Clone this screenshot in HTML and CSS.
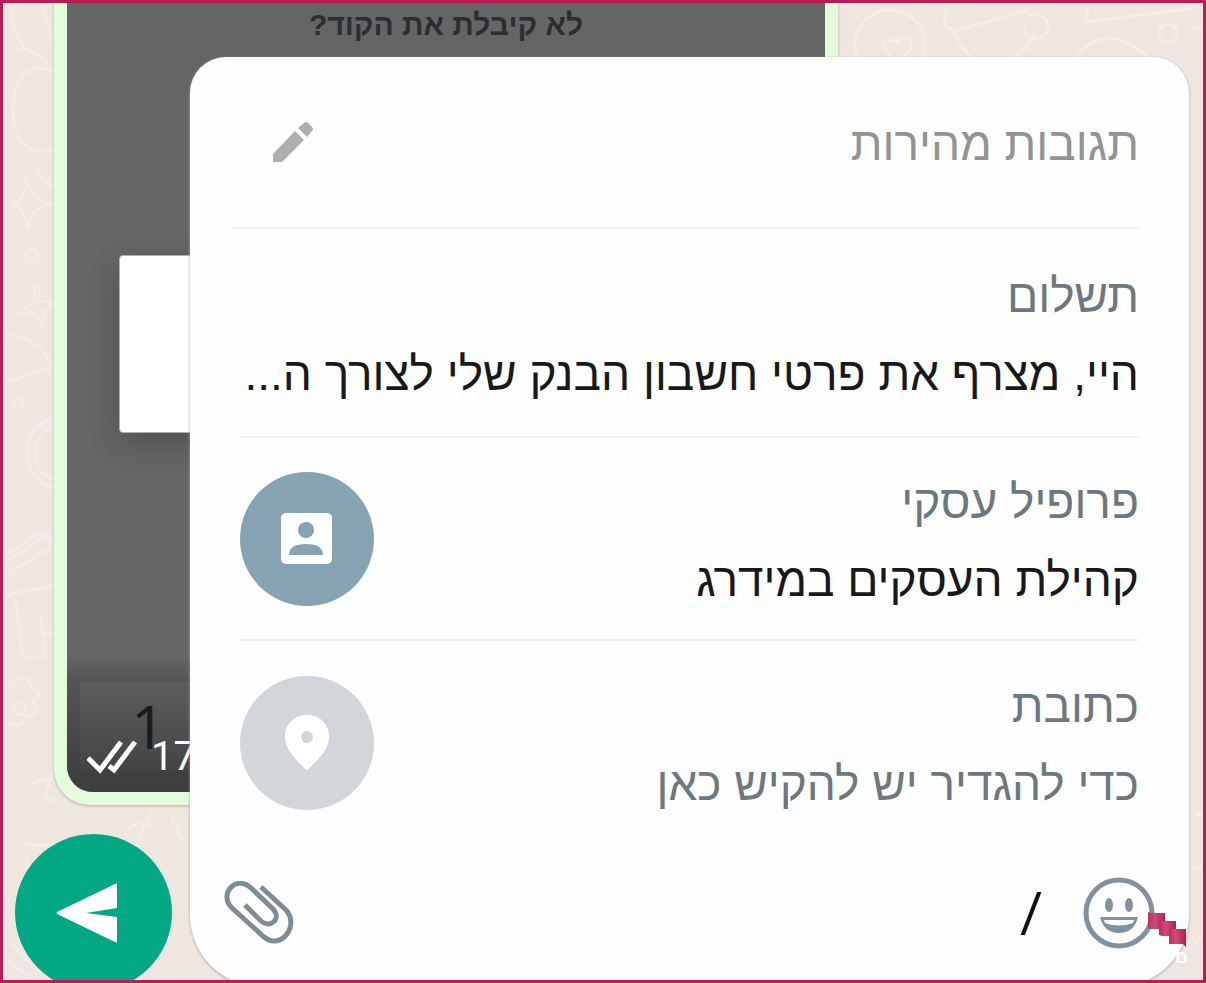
FILE: index.html
```html
<!DOCTYPE html>
<html lang="he" dir="rtl">
<head>
<meta charset="utf-8">
<title>תגובות מהירות</title>
<link rel="stylesheet" href="styles.css">
</head>
<body>
<main class="screen">
  <svg class="wallpaper" aria-hidden="true">
    <g fill="none" stroke="#f4ebe6" stroke-width="3">
      <path d="M8 3q2 40 24 48M40 3q6 30 14 38M54 147q-42 10-44-40q0-36 24-42q16 0 20 8M10 50q18-10 34 12M22 172q2 26-14 30q14 2 16 24q2-22 26-25q-24-6-28-29zM33 162q6 18 20 22"/>
      <circle cx="29" cy="252" r="6"/>
      <path d="M32 282v14l-17 16 18-2 6 14 2-16 11-8-14-2-3-16z"/>
      <path d="M3 332q32 0 46 32l-44 15M51 415q-28 8-27 40q4 24 27 30M51 422q-20 10-19 32q4 18 19 23"/>
      <circle cx="15" cy="400" r="5"/>
      <path d="M5 558l36-24q10 4 4 12l-38 24M6 550l26-18q14-4 18 8M4 592l50-10M12 595l8 60M38 610v20h16M20 655l22-2-4-40"/>
      <path d="M8 682q14-16 20 2q14 4 2 14q8 16-8 16q-4 14-16 4M16 700a6 6 0 1 0 1 0M28 780l20-6-6 22 14 2"/>
      <path d="M24 850v14h18M22 842h28M122 834q4-18 28-12M136 838l14-36M168 812l12 26M8 940l30 30M6 958l22 18"/>
    </g>
    <g fill="none" stroke="#f4ede5" stroke-width="3">
      <circle cx="887" cy="42" r="35"/>
      <path d="M880 40q8-6 14 0q4-8 12-4q8 10-8 18M880 40q2 8 8 14M943 7q-6 22 12 20l70-20M947 23q10 22 22 32M1033 27q-10 20-22 28M1027 13a12 12 0 1 1-6 10M1085 5l-2 14 110-14M1072 55q30-38 72-2"/>
      <circle cx="1165" cy="30" r="9"/>
      <path d="M1191 26h10M1191 866l12-6M1191 940l12-10M1192 810l10 3"/>
    </g>
  </svg>

  <section class="bubble" aria-label="הודעה">
    <div class="photo">
      <p class="question">לא קיבלת את הקוד?</p>
      <div class="sheet"></div>
      <div class="footer">
        <span class="key">1</span>
        <div class="meta">
          <svg width="50" height="34" viewBox="0 0 50 34" aria-hidden="true"><path d="M1 18l12 12L34 2M22 26l5 4L48 2" fill="none" stroke="#fff" stroke-width="5"/></svg>
          <time>17:34</time>
        </div>
      </div>
    </div>
  </section>

  <button class="send" type="button" aria-label="שליחה">
    <svg width="62" height="60" viewBox="0 0 62 60" aria-hidden="true"><path d="M61 1v24L30 30l31 4v25q0 1-2 0L1 31q-1-1 0-2L59 1q2-1 2 0z" fill="#fff"/></svg>
  </button>

  <section class="panel">
    <header class="head">
      <h1>תגובות מהירות</h1>
      <button class="plain" type="button" aria-label="עריכה">
        <svg width="42" height="42" viewBox="0 0 42 42" aria-hidden="true"><path d="M1 33v8h9l22-22-9-9zM26 7l6-5q2-2 4 0l4 4q2 2 0 4l-5 6z" fill="#acaeb0"/></svg>
      </button>
    </header>
    <ul class="replies">
      <li class="reply">
        <div class="words">
          <h2>תשלום</h2>
          <p>היי, מצרף את פרטי חשבון הבנק שלי לצורך ה...</p>
        </div>
      </li>
      <li class="reply">
        <div class="words">
          <h2>פרופיל עסקי</h2>
          <p>קהילת העסקים במידרג</p>
        </div>
        <span class="disc disc-profile">
          <svg width="52" height="52" viewBox="0 0 52 52" aria-hidden="true"><rect width="51" height="51" rx="5" fill="#fff"/><circle cx="25" cy="17" r="8" fill="#86a3b3"/><path d="M8 42q0-11 17-11t17 11z" fill="#86a3b3"/></svg>
        </span>
      </li>
      <li class="reply">
        <div class="words">
          <h2>כתובת</h2>
          <p class="muted">כדי להגדיר יש להקיש כאן</p>
        </div>
        <span class="disc disc-place">
          <svg width="46" height="58" viewBox="0 0 46 58" aria-hidden="true"><path d="M23 1C10 1 1 10 1 23c0 14 13 24 20 32q2 2 4 0c7-8 20-18 20-32C45 10 36 1 23 1z" fill="#fff"/><circle cx="23" cy="23" r="6" fill="#d2d6da"/></svg>
        </span>
      </li>
    </ul>
    <div class="composer">
      <button class="plain" type="button" aria-label="אמוג׳י">
        <svg width="72" height="72" viewBox="0 0 72 72" aria-hidden="true"><circle cx="36" cy="36" r="33" fill="none" stroke="#82919b" stroke-width="5"/><ellipse cx="26" cy="28" rx="4" ry="7" fill="#82919b"/><ellipse cx="46" cy="28" rx="4" ry="7" fill="#82919b"/><path d="M17 40h38q-4 16-19 16T17 40z" fill="#82919b"/><path d="M21 43h30l-1 3q-14 5-28 0z" fill="#fff"/></svg>
      </button>
      <input class="field" type="text" value="/" aria-label="הודעה">
      <button class="plain" type="button" aria-label="צירוף קובץ">
        <svg width="70" height="64" viewBox="0 0 70 64" aria-hidden="true"><path d="M37 6L62 29C76 44 57 70 40 56L8 27C-6 13 12-6 26 6L49 28C58 38 46 48 37 40L21 24" fill="none" stroke="#7e8c96" stroke-width="5"/></svg>
      </button>
    </div>
  </section>

  <div class="mark">
    <svg width="40" height="36" viewBox="0 0 40 36" aria-hidden="true">
      <defs><linearGradient id="ribbon"><stop offset="0" stop-color="#b8305f"/><stop offset=".4" stop-color="#d04a7a"/><stop offset="1" stop-color="#b02050"/></linearGradient></defs>
      <path d="M0 0l3 1h14v16H3l-3-1z" fill="url(#ribbon)"/>
      <path d="M11 8l3 1h14v15H14l-3-1z" fill="url(#ribbon)"/>
      <path d="M21 16l3 1h14v18l-3-3H21z" fill="url(#ribbon)"/>
    </svg>
    <span>ם</span>
  </div>
</main>
</body>
</html>
```
FILE: styles.css
```css
* {
  box-sizing: border-box;
  margin: 0;
  padding: 0;
}

body {
  font-family: "Liberation Sans", Arial, sans-serif;
}

.screen {
  position: relative;
  height: 100vh;
  overflow: hidden;
  border: 3px solid #b91c54;
  background: #eee6df;
}

.wallpaper {
  position: absolute;
  inset: 0;
  width: 100%;
  height: 100%;
}

.bubble {
  position: relative;
  width: 784px;
  max-width: 90%;
  margin-right: auto;
  margin-left: 51px;
  padding: 0 13px 13px;
  background: #e3fddb;
  border-radius: 0 0 36px 36px;
  box-shadow: 0 1px 3px #b8b0a8;
}

.photo {
  display: flex;
  flex-direction: column;
  align-items: flex-end;
  height: 789px;
  overflow: hidden;
  background: #656565;
  border-radius: 0 0 26px 26px;
}

.question {
  align-self: center;
  font-size: 30px;
  font-weight: 700;
  line-height: 44px;
  color: #2a2f33;
}

.sheet {
  width: 640px;
  height: 178px;
  margin-top: 208px;
  margin-left: 52px;
  background: #fff;
  border: 1px solid #b0b0b0;
  border-radius: 4px;
  box-shadow: 0 10px 30px rgba(0, 0, 0, 0.2);
}

.footer {
  position: relative;
  width: 100%;
  margin-top: auto;
  height: 134px;
  padding: 24px 13px;
  background: linear-gradient(#656565, #545556 15%, #3f4042 85%, #3c3d3f);
  direction: ltr;
}

.key {
  display: block;
  width: 220px;
  padding-left: 51px;
  background: linear-gradient(rgba(255, 255, 255, 0.05), rgba(255, 255, 255, 0.02));
  border-radius: 4px;
  font: 60px/88px "Noto Sans", sans-serif;
  color: #1c1d1e;
}

.meta {
  position: absolute;
  left: 20px;
  bottom: 12px;
  display: flex;
  align-items: center;
  gap: 14px;
  font: 40px/46px Roboto, sans-serif;
  color: #fff;
}

.send {
  position: relative;
  display: flex;
  align-items: center;
  justify-content: center;
  width: 157px;
  height: 157px;
  margin: 29px auto 0 12px;
  padding-right: 14px;
  border: 0;
  border-radius: 50%;
  background: #02a884;
}

.panel {
  position: absolute;
  top: 54px;
  right: 14px;
  bottom: -7px;
  left: 187px;
  display: flex;
  flex-direction: column;
  padding: 0 50px 0 34px;
  background: #fefefe;
  border-radius: 36px 36px 72px 72px;
  box-shadow: 0 1px 3px #aaa;
}

.head {
  display: flex;
  align-items: center;
  justify-content: space-between;
  height: 172px;
  padding-left: 40px;
  margin-left: 8px;
  border-bottom: 2px solid #f1f1f1;
}

h1,
h2,
.reply p {
  padding-top: 4px;
  font-size: 46px;
  font-weight: 400;
  line-height: 74px;
  white-space: nowrap;
}

h1 {
  color: #939393;
}

h2 {
  color: #6b7880;
}

.reply p {
  color: #17191b;
}

.reply .muted {
  color: #6b7880;
}

.plain {
  display: flex;
  border: 0;
  background: none;
}

.replies {
  list-style: none;
}

.reply {
  display: flex;
  align-items: center;
  justify-content: space-between;
  height: 203px;
  margin-left: 16px;
}

.reply:first-child {
  height: 209px;
}

.reply:not(:last-child) {
  border-bottom: 2px solid #f1f1f1;
}

.disc {
  display: flex;
  align-items: center;
  justify-content: center;
  width: 134px;
  height: 134px;
  border-radius: 50%;
}

.disc-profile {
  background: #86a3b3;
}

.disc-place {
  background: #d2d6da;
}

.composer {
  display: flex;
  align-items: center;
  gap: 40px;
  height: 138px;
  margin-right: -16px;
}

.field {
  flex: 1;
  min-width: 0;
  border: 0;
  background: none;
  font: 56px/64px Roboto, sans-serif;
  color: #111;
}

.mark {
  position: absolute;
  right: 15px;
  bottom: 14px;
  display: flex;
  flex-direction: column;
  font: 700 18px/18px "Liberation Sans", sans-serif;
  color: #fff;
}
```
